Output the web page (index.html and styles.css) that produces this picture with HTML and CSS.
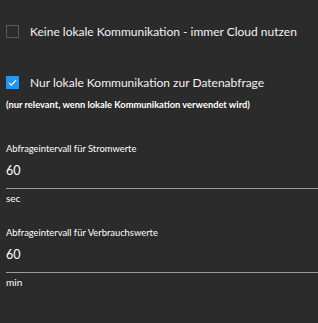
FILE: index.html
```html
<!DOCTYPE html>
<html lang="de">
<head>
    <meta charset="UTF-8">
    <title>Einstellungen</title>
    <link rel="stylesheet" href="styles.css">
</head>
<body>
    <div class="settings">
        <label class="check-row first">
            <span class="box"></span>
            <span class="check-text">Keine lokale Kommunikation - immer Cloud nutzen</span>
        </label>

        <label class="check-row second">
            <span class="box checked">
                <svg width="13" height="13" viewBox="0 0 13 13"><path d="M3 6.8 L5.4 9.2 L10.2 3.8" fill="none" stroke="#fff" stroke-width="1.2"/></svg>
            </span>
            <span class="check-text">Nur lokale Kommunikation zur Datenabfrage</span>
        </label>
        <div class="hint">(nur relevant, wenn lokale Kommunikation verwendet wird)</div>

        <!-- Intervalle -->
        <div class="field first-field">
            <div class="field-label">Abfrageintervall für Stromwerte</div>
            <div class="field-value">60</div>
            <div class="field-unit">sec</div>
        </div>
        <div class="field">
            <div class="field-label">Abfrageintervall für Verbrauchswerte</div>
            <div class="field-value">60</div>
            <div class="field-unit">min</div>
        </div>
    </div>
</body>
</html>
```

FILE: styles.css
```css
body {
    margin: 0;
    background: #2b2b2b;
    color: #fff;
    font-family: Lato, "Open Sans", sans-serif;
}

.settings {
    padding: 0 0 0 6px;
}

.check-row {
    display: flex;
    align-items: center;
    gap: 11px;
    height: 13px;
    white-space: nowrap;
}

.check-row.first {
    margin-top: 25px;
}

.check-row.second {
    margin-top: 38px;
}

.box {
    width: 11px;
    height: 11px;
    border: 1px solid #5a5a5a;
    flex-shrink: 0;
    display: flex;
}

.box.checked {
    width: 13px;
    height: 13px;
    border: none;
    background: #2196f3;
}

.check-text {
    font-size: 12px;
    color: #f2f2f2;
}

.hint {
    margin-top: 10px;
    font-size: 9.3px;
    font-weight: bold;
    line-height: 12px;
    white-space: nowrap;
}

.field {
    height: 84px;
}

.first-field {
    margin-top: 31px;
}

.field-label {
    font-size: 9.4px;
    line-height: 14px;
}

.field-value {
    margin-top: 7px;
    font-size: 12.5px;
    line-height: 16px;
    padding-bottom: 9px;
    border-bottom: 1px solid #9a9a9a;
}

.field-unit {
    margin-top: 2px;
    font-size: 10px;
    line-height: 14px;
}
```
